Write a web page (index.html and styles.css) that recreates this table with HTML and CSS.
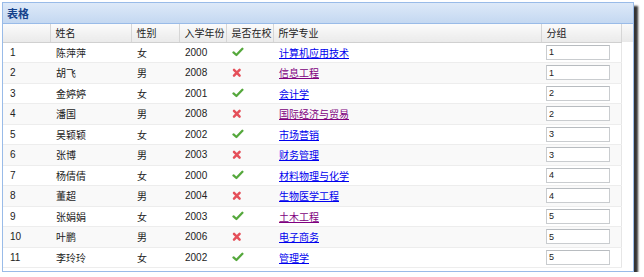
FILE: index.html
```html
<!DOCTYPE html>
<html lang="zh">
<head>
<meta charset="utf-8">
<title>表格</title>
<link rel="stylesheet" href="styles.css">
</head>
<body>
<div class="panel">
  <div class="panel-title">表格</div>
  <div class="panel-body">
    <table class="grid">
      <colgroup>
        <col class="c-num"><col class="c-name"><col class="c-sex"><col class="c-year"><col class="c-in"><col class="c-major"><col class="c-group">
      </colgroup>
      <thead>
        <tr><th></th><th>姓名</th><th>性别</th><th>入学年份</th><th>是否在校</th><th>所学专业</th><th>分组</th></tr>
      </thead>
      <tbody>
        <tr><td>1</td><td>陈萍萍</td><td>女</td><td>2000</td><td><svg class="ico" width="12" height="10" viewBox="0 0 12 10"><path class="ok" d="M1.5 5.4 L4.4 8 L10.4 1.8"/></svg></td><td><a href="#a1">计算机应用技术</a></td><td><input class="inp" value="1"></td></tr>
        <tr><td>2</td><td>胡飞</td><td>男</td><td>2008</td><td><svg class="ico" width="12" height="10" viewBox="0 0 12 10"><path class="no" d="M2 1.8 L7.6 7.6 M7.6 1.8 L2 7.6"/></svg></td><td><a class="visited" href="#a2">信息工程</a></td><td><input class="inp" value="1"></td></tr>
        <tr><td>3</td><td>金婷婷</td><td>女</td><td>2001</td><td><svg class="ico" width="12" height="10" viewBox="0 0 12 10"><path class="ok" d="M1.5 5.4 L4.4 8 L10.4 1.8"/></svg></td><td><a href="#a3">会计学</a></td><td><input class="inp" value="2"></td></tr>
        <tr><td>4</td><td>潘国</td><td>男</td><td>2008</td><td><svg class="ico" width="12" height="10" viewBox="0 0 12 10"><path class="no" d="M2 1.8 L7.6 7.6 M7.6 1.8 L2 7.6"/></svg></td><td><a class="visited" href="#a4">国际经济与贸易</a></td><td><input class="inp" value="2"></td></tr>
        <tr><td>5</td><td>吴颖颖</td><td>女</td><td>2002</td><td><svg class="ico" width="12" height="10" viewBox="0 0 12 10"><path class="ok" d="M1.5 5.4 L4.4 8 L10.4 1.8"/></svg></td><td><a href="#a5">市场营销</a></td><td><input class="inp" value="3"></td></tr>
        <tr><td>6</td><td>张博</td><td>男</td><td>2003</td><td><svg class="ico" width="12" height="10" viewBox="0 0 12 10"><path class="no" d="M2 1.8 L7.6 7.6 M7.6 1.8 L2 7.6"/></svg></td><td><a href="#a6">财务管理</a></td><td><input class="inp" value="3"></td></tr>
        <tr><td>7</td><td>杨倩倩</td><td>女</td><td>2000</td><td><svg class="ico" width="12" height="10" viewBox="0 0 12 10"><path class="ok" d="M1.5 5.4 L4.4 8 L10.4 1.8"/></svg></td><td><a href="#a7">材料物理与化学</a></td><td><input class="inp" value="4"></td></tr>
        <tr><td>8</td><td>董超</td><td>男</td><td>2004</td><td><svg class="ico" width="12" height="10" viewBox="0 0 12 10"><path class="no" d="M2 1.8 L7.6 7.6 M7.6 1.8 L2 7.6"/></svg></td><td><a href="#a8">生物医学工程</a></td><td><input class="inp" value="4"></td></tr>
        <tr><td>9</td><td>张娟娟</td><td>女</td><td>2003</td><td><svg class="ico" width="12" height="10" viewBox="0 0 12 10"><path class="ok" d="M1.5 5.4 L4.4 8 L10.4 1.8"/></svg></td><td><a class="visited" href="#a9">土木工程</a></td><td><input class="inp" value="5"></td></tr>
        <tr><td>10</td><td>叶鹏</td><td>男</td><td>2006</td><td><svg class="ico" width="12" height="10" viewBox="0 0 12 10"><path class="no" d="M2 1.8 L7.6 7.6 M7.6 1.8 L2 7.6"/></svg></td><td><a href="#a10">电子商务</a></td><td><input class="inp" value="5"></td></tr>
        <tr><td>11</td><td>李玲玲</td><td>女</td><td>2002</td><td><svg class="ico" width="12" height="10" viewBox="0 0 12 10"><path class="ok" d="M1.5 5.4 L4.4 8 L10.4 1.8"/></svg></td><td><a href="#a11">管理学</a></td><td><input class="inp" value="5"></td></tr>
      </tbody>
    </table>
  </div>
</div>
</body>
</html>
```
FILE: styles.css
```css
html, body {
  margin: 0;
  padding: 0;
  background: #ffffff;
}
body {
  font-family: "Liberation Sans", "Noto Sans CJK SC", sans-serif;
  font-size: 10px;
  color: #222;
}
.panel {
  margin: 2px 0 0 2px;
  width: 632px;
  height: 270px;
  box-sizing: border-box;
  border: 1px solid #99bbe8;
  background: #fff;
  box-shadow: 4px 4px 2px rgba(30, 30, 30, 0.9);
  display: flex;
  flex-direction: column;
}
.panel-title {
  height: 21px;
  flex: none;
  box-sizing: border-box;
  border-bottom: 1px solid #99bbe8;
  background: linear-gradient(#dde9f8, #c4d8f1);
  color: #15428b;
  font-weight: bold;
  font-size: 11px;
  line-height: 20px;
  padding-left: 4px;
  font-family: "Noto Sans CJK SC", sans-serif;
}
.panel-body {
  flex: 1;
  background: linear-gradient(#f9f9f9, #e9e9e9) top / 100% 18px no-repeat, #fff;
}
.grid {
  border-collapse: collapse;
  table-layout: fixed;
  width: 618px;
}
.c-num { width: 47px; }
.c-name { width: 81px; }
.c-sex { width: 48px; }
.c-year { width: 47px; }
.c-in { width: 47px; }
.c-major { width: 268px; }
.c-group { width: 80px; }
.grid th {
  height: 18px;
  box-sizing: border-box;
  padding: 0 0 0 5px;
  text-align: left;
  font-weight: normal;
  color: #222;
  font-family: "Noto Sans CJK SC", sans-serif;
  font-size: 10px;
  line-height: 17px;
  background: linear-gradient(#fbfbfb, #eaeaea);
  border-bottom: 1px solid #d0d0d0;
  border-left: 1px solid #d6d6d6;
}
.grid th:first-child { border-left: none; }
.grid td {
  height: 20.5px;
  box-sizing: border-box;
  padding: 0 0 0 6px;
  border-bottom: 1px solid #ededed;
  white-space: nowrap;
  overflow: hidden;
  font-family: "Liberation Sans", "Noto Sans CJK SC", sans-serif;
  font-size: 10px;
  color: #222;
  vertical-align: middle;
}
.grid td:last-child { border-right: 1px solid #e6e6e6; }
.grid th:last-child { border-right: 1px solid #d6d6d6; }
.grid td:first-child { padding-left: 7px; }
.grid tbody tr:nth-child(even) td { background: #f9f9f9; }
.grid a {
  color: #0000ee;
  text-decoration: underline;
  font-family: "Noto Sans CJK SC", sans-serif;
}
.grid a.visited { color: #800080; }
.ico { display: block; }
.ok {
  fill: none;
  stroke: #55a83c;
  stroke-width: 2.3;
  stroke-linecap: round;
  stroke-linejoin: round;
}
.no {
  fill: none;
  stroke: #e5505a;
  stroke-width: 2.5;
  stroke-linecap: round;
}
.inp {
  display: block;
  width: 64px;
  height: 15px;
  box-sizing: border-box;
  margin-left: -1px;
  border: 1px solid #c9cccf;
  border-top-color: #b8bcc0;
  padding: 0 2px;
  font-family: "Liberation Sans", sans-serif;
  font-size: 9px;
  color: #222;
  background: #fff;
}
```
